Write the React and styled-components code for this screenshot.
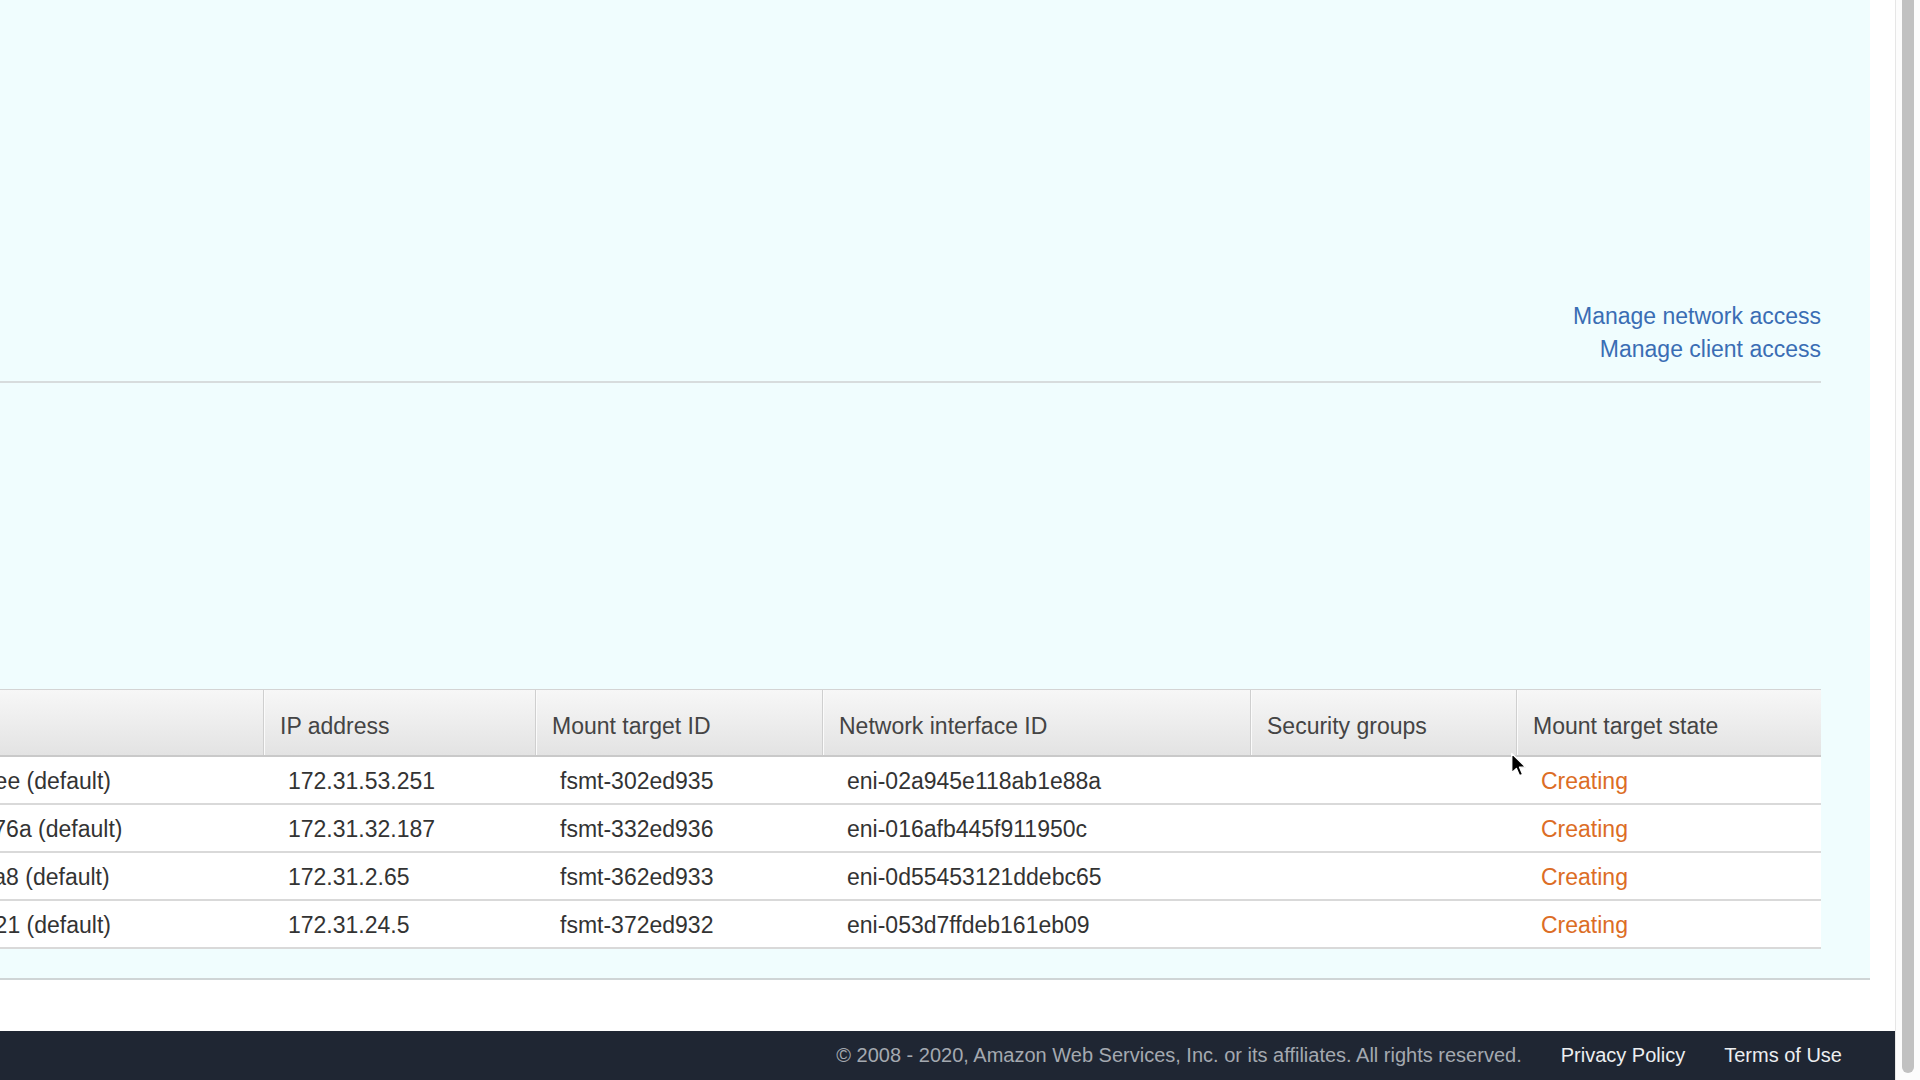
import React, { useLayoutEffect, useRef } from 'react'
import styled, { createGlobalStyle } from 'styled-components'

// the page is scrolled sideways in the screenshot
const SCROLL_X = 348;

const GlobalStyle = createGlobalStyle`
  html, body {
    margin: 0;
    padding: 0;
    overflow: hidden;
  }
  body {
    font-family: "Liberation Sans", Arial, Helvetica, sans-serif;
    background: #fff;
  }
`;

const Screen = styled.div`
  position: relative;
  display: flex;
  width: 1920px;
  height: 1080px;
  overflow: hidden;
`;

const Page = styled.div`
  flex: 1;
  min-width: 0;
  display: flex;
  flex-direction: column;
`;

const Viewport = styled.div`
  flex: 1;
  overflow: hidden;
  background: #fff;
`;

const Canvas = styled.div`
  width: calc(100% + ${SCROLL_X}px);
  padding-right: 25px;
  box-sizing: border-box;
`;

const Panel = styled.section`
  background: #f0fdfe;
  padding: 300px 49px 29px;
  border-bottom: 2px solid #cfd5d6;
`;

const Actions = styled.div`
  display: flex;
  flex-direction: column;
  align-items: flex-end;
`;

const ActionLink = styled.a`
  font-size: 23px;
  line-height: 33px;
  color: #3a6db4;
  text-decoration: none;
  cursor: pointer;
`;

const Rule = styled.hr`
  margin: 15px 0 0;
  border: 0;
  height: 2px;
  background: #d7dcdd;
`;

const Table = styled.div`
  margin-top: 306px;
  background: #fff;
`;

const COLS = '562px 272px 287px 428px 266px 305px';

const HeaderRow = styled.div`
  display: grid;
  grid-template-columns: ${COLS};
  height: 68px;
  box-sizing: border-box;
  background: linear-gradient(#f7f7f7, #e3e3e3);
  border-top: 1px solid #d4d4d4;
  border-bottom: 2px solid #c9c9c9;
`;

const HeaderCell = styled.div`
  display: flex;
  align-items: center;
  padding: 8px 16px 0;
  font-size: 23px;
  color: #444;
  white-space: nowrap;
  overflow: hidden;
  & + & {
    border-left: 1px solid #cfcfcf;
    box-shadow: inset 1px 0 0 #fbfbfb;
  }
`;

const BodyRow = styled.div`
  display: grid;
  grid-template-columns: ${COLS};
  height: 48px;
  box-sizing: border-box;
  border-bottom: 2px solid #d9d9d9;
  background: #fff;
`;

const Cell = styled.div`
  display: flex;
  align-items: center;
  padding: 2px 20px 0 25px;
  font-size: 23px;
  color: ${p => (p.$state ? '#dc6d25' : '#333')};
  white-space: nowrap;
  overflow: hidden;
`;

const Footer = styled.footer`
  flex-shrink: 0;
  height: 49px;
  background: #1f2633;
  display: flex;
  align-items: center;
  justify-content: flex-end;
  gap: 39px;
  padding-right: 53px;
  font-size: 20px;
`;

const Copy = styled.span`
  color: #a4a9b0;
`;

const FooterLink = styled.a`
  color: #eceef0;
  text-decoration: none;
`;

const ScrollTrack = styled.div`
  flex-shrink: 0;
  width: 25px;
  box-sizing: border-box;
  background: #fcfcfc;
  border-left: 1px solid #e6e6e6;
  padding-left: 6px;
`;

const Thumb = styled.div`
  width: 12px;
  height: 1073px;
  background: #c1c1c1;
  border-radius: 0 0 6px 6px;
`;

const Pointer = styled.svg`
  position: absolute;
  left: 1510px;
  top: 752px;
  width: 17px;
  height: 26px;
  pointer-events: none;
`;

const rows = [
  { subnet: 'subnet-0a5b3d8e6109274ee (default)', ip: '172.31.53.251', mt: 'fsmt-302ed935', eni: 'eni-02a945e118ab1e88a' },
  { subnet: 'subnet-04d9b1e8a23d5ec76a (default)', ip: '172.31.32.187', mt: 'fsmt-332ed936', eni: 'eni-016afb445f911950c' },
  { subnet: 'subnet-0b3e78d215a9e4ca8 (default)', ip: '172.31.2.65', mt: 'fsmt-362ed933', eni: 'eni-0d55453121ddebc65' },
  { subnet: 'subnet-0e61d4b9a03587d21 (default)', ip: '172.31.24.5', mt: 'fsmt-372ed932', eni: 'eni-053d7ffdeb161eb09' },
];

const App = () => {
  const viewRef = useRef(null);

  useLayoutEffect(() => {
    if (viewRef.current) viewRef.current.scrollLeft = SCROLL_X;
  }, []);

  return (
    <Screen>
      <GlobalStyle />
      <Page>
        <Viewport ref={viewRef}>
          <Canvas>
            <Panel>
              <Actions>
                <ActionLink>Manage network access</ActionLink>
                <ActionLink>Manage client access</ActionLink>
              </Actions>
              <Rule />
              <Table>
                <HeaderRow>
                  <HeaderCell>Subnet</HeaderCell>
                  <HeaderCell>IP address</HeaderCell>
                  <HeaderCell>Mount target ID</HeaderCell>
                  <HeaderCell>Network interface ID</HeaderCell>
                  <HeaderCell>Security groups</HeaderCell>
                  <HeaderCell>Mount target state</HeaderCell>
                </HeaderRow>
                {rows.map(r => (
                  <BodyRow key={r.mt}>
                    <Cell>{r.subnet}</Cell>
                    <Cell>{r.ip}</Cell>
                    <Cell>{r.mt}</Cell>
                    <Cell>{r.eni}</Cell>
                    <Cell></Cell>
                    <Cell $state>Creating</Cell>
                  </BodyRow>
                ))}
              </Table>
            </Panel>
          </Canvas>
        </Viewport>
        <Footer>
          <Copy>© 2008 - 2020, Amazon Web Services, Inc. or its affiliates. All rights reserved.</Copy>
          <FooterLink>Privacy Policy</FooterLink>
          <FooterLink>Terms of Use</FooterLink>
        </Footer>
      </Page>
      <ScrollTrack>
        <Thumb />
      </ScrollTrack>
      <Pointer viewBox="0 0 16 25">
        <path
          d="M1.5 1.5 L1.5 20 L6 15.8 L9 22.8 L12 21.5 L9 14.6 L15 14.6 Z"
          fill="#000"
          stroke="#fff"
          strokeWidth="1.3"
          strokeLinejoin="round"
        />
      </Pointer>
    </Screen>
  )
}

export default App
